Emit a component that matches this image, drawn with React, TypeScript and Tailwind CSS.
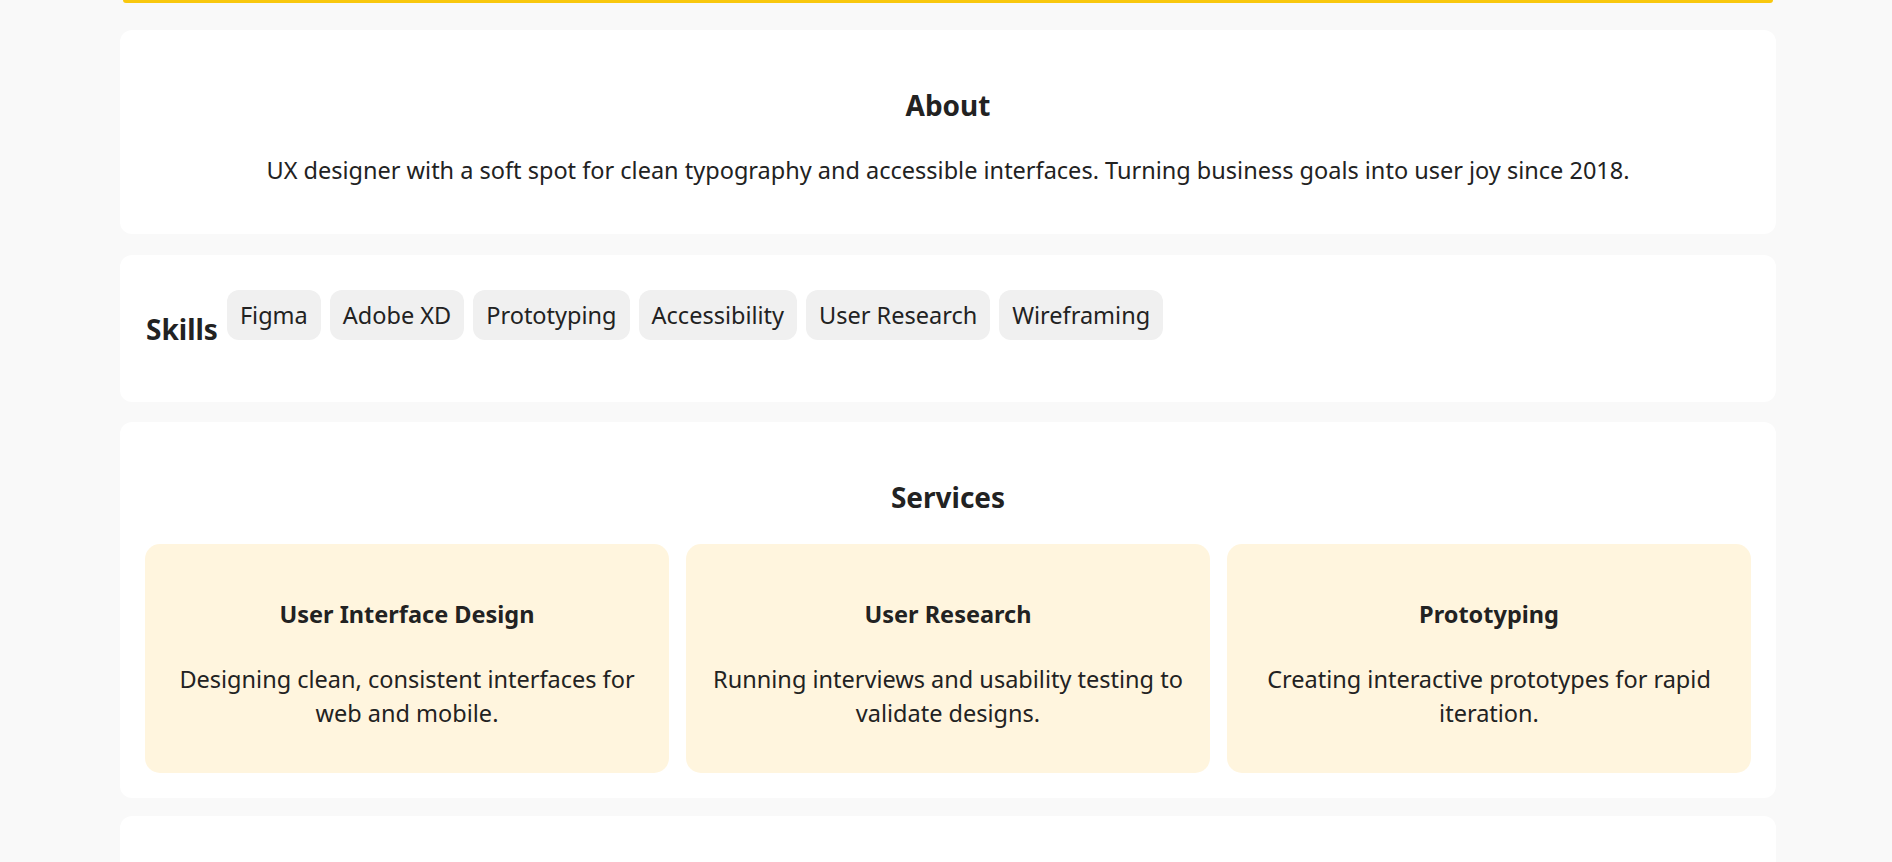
import React from 'react';

const skills = ['Figma', 'Adobe XD', 'Prototyping', 'Accessibility', 'User Research', 'Wireframing'];

const services = [
  { title: 'User Interface Design', text: 'Designing clean, consistent interfaces for web and mobile.' },
  { title: 'User Research', text: 'Running interviews and usability testing to validate designs.' },
  { title: 'Prototyping', text: 'Creating interactive prototypes for rapid iteration.' },
];

const App: React.FC = () => {
  return (
    <div className="min-h-screen bg-[#f9f9f9] font-['Noto_Sans',sans-serif] text-[#222]">
      <div className="ml-[120px] flex w-[1656px] flex-col">
        {/* bottom edge of the hero card, scrolled off */}
        <div className="mx-[3px] h-[3px] rounded-b-full bg-[#f9c80e]" />

        {/* About */}
        <section className="mt-[27px] rounded-[12px] bg-white pt-[55px] pb-[46px] text-center">
          <h2 className="text-[28px] font-bold leading-[40px]">About</h2>
          <p className="mt-[27px] text-[23.5px] leading-[36px]">
            UX designer with a soft spot for clean typography and accessible interfaces. Turning business goals into user joy since 2018.
          </p>
        </section>

        {/* Skills */}
        <section className="mt-[21px] flex items-start rounded-[12px] bg-white px-[26px] pt-[35px] pb-[55px]">
          <h3 className="mt-[21px] mr-[9px] text-[28px] font-bold leading-[36px]">Skills</h3>
          <div className="flex flex-wrap gap-[9px]">
            {skills.map((s) => (
              <span key={s} className="rounded-[12px] bg-[#f0f0f0] px-[13px] py-[7px] text-[23.5px] leading-[36px]">
                {s}
              </span>
            ))}
          </div>
        </section>

        {/* Services */}
        <section className="mt-[20px] rounded-[12px] bg-white px-[25px] pt-[55px] pb-[25px]">
          <h2 className="text-center text-[28px] font-bold leading-[40px]">Services</h2>
          <div className="mt-[27px] grid grid-cols-3 gap-[17px]">
            {services.map((s) => (
              <div key={s.title} className="rounded-[15px] bg-[#fff5de] px-[24px] pt-[52px] pb-[43px] text-center">
                <h4 className="text-[23.5px] font-bold leading-[36px]">{s.title}</h4>
                <p className="mt-[30px] text-[23.5px] leading-[34px]">{s.text}</p>
              </div>
            ))}
          </div>
        </section>

        {/* next section, cut off by the viewport */}
        <section className="mt-[18px] h-[240px] rounded-[12px] bg-white" />
      </div>
    </div>
  );
};

export default App;
